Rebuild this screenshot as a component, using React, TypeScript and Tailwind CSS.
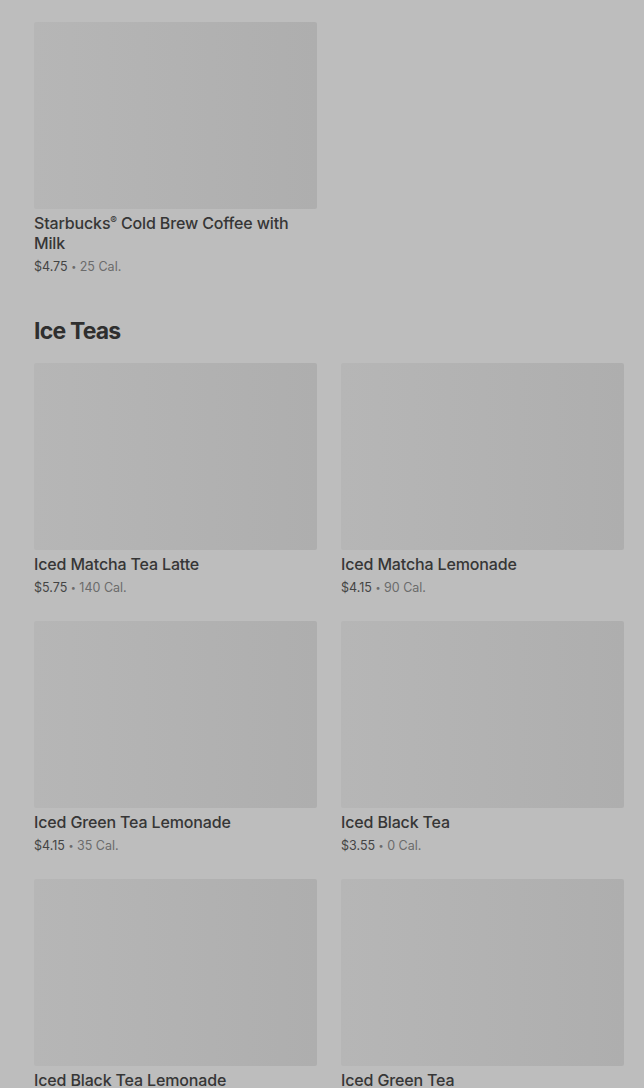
const items = [
  { name: 'Iced Matcha Tea Latte', price: '$5.75', cal: '140 Cal.' },
  { name: 'Iced Matcha Lemonade', price: '$4.15', cal: '90 Cal.' },
  { name: 'Iced Green Tea Lemonade', price: '$4.15', cal: '35 Cal.' },
  { name: 'Iced Black Tea', price: '$3.55', cal: '0 Cal.' },
  { name: 'Iced Black Tea Lemonade', price: '$4.15', cal: '25 Cal.' },
  { name: 'Iced Green Tea', price: '$3.55', cal: '0 Cal.' },
]

interface CardProps {
  name: React.ReactNode
  price: string
  cal: string
}

const Card = ({ name, price, cal }: CardProps) => (
  <div className="flex flex-col">
    <div className="h-[187px] rounded-[2px] bg-gradient-to-r from-[#b6b6b6] to-[#aeaeae]" />
    <p className="mt-[4px] text-[16px] leading-[20px] font-medium tracking-[-0.15px] text-[#363636]">{name}</p>
    <p className="mt-[5px] text-[12.5px] leading-[18px] text-[#444]">
      {price}
      <span className="text-[#6b6b6b]">
        {' '}
        <span className="text-[9px] leading-[0] relative top-[-1px]">•</span> {cal}
      </span>
    </p>
  </div>
)

export default function App() {
  return (
    <div
      className="min-h-[1088px] bg-[#bdbdbd] pl-[34px] pr-[20px] pt-[22px]"
      style={{ fontFamily: 'Inter, "Noto Sans", sans-serif' }}
    >
      <div className="grid grid-cols-2 gap-x-[24px]">
        <Card
          name={
            <>
              Starbucks<span className="text-[10px] leading-[0] relative top-[-5px]">®</span> Cold Brew Coffee with Milk
            </>
          }
          price="$4.75"
          cal="25 Cal."
        />
      </div>
      <h2 className="mt-[40px] text-[23px] leading-[30px] font-bold tracking-[-0.8px] text-[#2f2f2f]">Ice Teas</h2>
      <div className="mt-[17px] grid grid-cols-2 gap-x-[24px] gap-y-[24px]">
        {items.map(item => (
          <Card key={item.name} {...item} />
        ))}
      </div>
    </div>
  )
}
